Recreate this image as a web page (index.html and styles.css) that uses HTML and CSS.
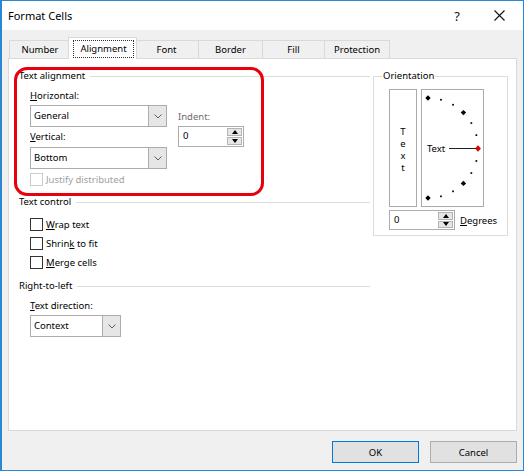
FILE: index.html
```html
<!DOCTYPE html>
<html>
<head>
<meta charset="utf-8">
<title>Format Cells</title>
<link rel="stylesheet" href="styles.css">
</head>
<body>
<div class="dialog">
  <div class="titlebar">
    <span class="title">Format Cells</span>
    <span class="help">?</span>
    <span class="close"><svg width="11" height="11" viewBox="0 0 11 11"><path d="M0.5 0.5L10.5 10.5M10.5 0.5L0.5 10.5" stroke="#111" stroke-width="1.1" fill="none"/></svg></span>
  </div>
  <div class="client">
    <div class="tabs">
      <div class="tab t-number">Number</div>
      <div class="tab active t-align"><span class="focus">Alignment</span></div>
      <div class="tab t-font">Font</div>
      <div class="tab t-border">Border</div>
      <div class="tab t-fill">Fill</div>
      <div class="tab t-prot">Protection</div>
    </div>
    <div class="panel">
      <div class="leftcol">
        <div class="head"><span>Text alignment</span><span class="rule"></span></div>
        <div class="sec align-row">
          <div class="align-main">
            <div class="lbl"><u>H</u>orizontal:</div>
            <div class="combo w-main first">
              <span class="val">General</span>
              <span class="arrow"><svg width="8" height="5" viewBox="0 0 8 5"><path d="M0.5 0.5L4 4L7.5 0.5" stroke="#606060" fill="none"/></svg></span>
            </div>
            <div class="lbl gap2"><u>V</u>ertical:</div>
            <div class="combo w-main">
              <span class="val">Bottom</span>
              <span class="arrow"><svg width="8" height="5" viewBox="0 0 8 5"><path d="M0.5 0.5L4 4L7.5 0.5" stroke="#606060" fill="none"/></svg></span>
            </div>
          </div>
          <div class="indent-col">
            <div class="lbl dim">Indent:</div>
            <div class="spin indent-spin">
              <span class="val">0</span>
              <span class="btns"><span class="sb up"></span><span class="sb down"></span></span>
            </div>
          </div>
        </div>
        <div class="sec check disabled justify"><span class="cb"></span><span>Justify distributed</span></div>

        <div class="head h-control"><span>Text control</span><span class="rule"></span></div>
        <div class="sec checks">
          <div class="check"><span class="cb"></span><span><u>W</u>rap text</span></div>
          <div class="check"><span class="cb"></span><span>Shrin<u>k</u> to fit</span></div>
          <div class="check"><span class="cb"></span><span><u>M</u>erge cells</span></div>
        </div>

        <div class="head h-rtl"><span>Right-to-left</span><span class="rule"></span></div>
        <div class="sec">
          <div class="lbl gap4"><u>T</u>ext direction:</div>
          <div class="combo w-ctx first">
            <span class="val">Context</span>
            <span class="arrow"><svg width="8" height="5" viewBox="0 0 8 5"><path d="M0.5 0.5L4 4L7.5 0.5" stroke="#606060" fill="none"/></svg></span>
          </div>
        </div>
      </div>

      <fieldset class="orient">
        <legend>Orientation</legend>
        <div class="orient-row">
          <div class="vtext"><span>T</span><span>e</span><span>x</span><span>t</span></div>
          <div class="dial">
            <svg width="61" height="116" viewBox="0 0 61 116">
              <g fill="#000">
                <polygon points="6,5.3 8.7,8 6,10.7 3.3,8"/>
                <rect x="18.1" y="8.9" width="1.7" height="1.7"/>
                <rect x="30.2" y="13.9" width="1.7" height="1.7"/>
                <polygon points="41.4,19.9 44.1,22.6 41.4,25.3 38.7,22.6"/>
                <rect x="48.5" y="32.2" width="1.7" height="1.7"/>
                <rect x="53.5" y="44.3" width="1.7" height="1.7"/>
                <rect x="53.5" y="70.1" width="1.7" height="1.7"/>
                <rect x="48.5" y="82.2" width="1.7" height="1.7"/>
                <polygon points="41.4,90.7 44.1,93.4 41.4,96.1 38.7,93.4"/>
                <rect x="30.2" y="100.5" width="1.7" height="1.7"/>
                <rect x="18.1" y="105.5" width="1.7" height="1.7"/>
                <polygon points="6,105.3 8.7,108 6,110.7 3.3,108"/>
              </g>
              <line x1="27" y1="58.5" x2="54" y2="58.5" stroke="#222" stroke-width="1"/>
              <polygon points="56,55.6 58.6,58.5 56,61.4 53.4,58.5" fill="#e00000" stroke="#900" stroke-width="0.5"/>
              <text x="5" y="62" class="dial-text">Text</text>
            </svg>
          </div>
        </div>
        <div class="deg-row">
          <div class="spin deg-spin">
            <span class="val">0</span>
            <span class="btns"><span class="sb up"></span><span class="sb down"></span></span>
          </div>
          <span class="deg-lbl"><u>D</u>egrees</span>
        </div>
      </fieldset>

      <div class="annot"></div>
    </div>
    <div class="footer">
      <button class="btn default">OK</button>
      <button class="btn">Cancel</button>
    </div>
  </div>
</div>
</body>
</html>
```

FILE: styles.css
```css
* { box-sizing: border-box; }
html, body { margin: 0; padding: 0; background: #fff; }
body {
  font-family: "Noto Sans", "Open Sans", sans-serif;
  font-size: 9.5px;
  color: #000;
  width: 526px;
  height: 472px;
  overflow: hidden;
}
u { text-decoration: underline; text-underline-offset: 1px; }

.dialog {
  width: 524px;
  height: 471px;
  border: 1px solid #2b86d3;
  border-left-width: 2px;
  display: flex;
  flex-direction: column;
  background: #f0f0f0;
}

.titlebar {
  height: 29px;
  flex: none;
  background: #fff;
  display: flex;
  align-items: center;
  padding: 0 18px 0 6px;
}
.title { font-size: 11px; }
.help { margin-left: auto; font-size: 13px; width: 14px; text-align: center; color: #111; }
.close { margin-left: 30px; display: flex; }

.client {
  flex: 1;
  padding: 7px 6px 0 6px;
  display: flex;
  flex-direction: column;
}

.tabs {
  height: 21px;
  display: flex;
  align-items: flex-end;
}
.tab {
  height: 18px;
  border: 1px solid #d9d9d9;
  border-bottom: none;
  background: #f0f0f0;
  margin-left: -1px;
  display: flex;
  align-items: center;
  justify-content: center;
  line-height: 16px;
  padding-top: 1px;
}
.t-number { width: 62px; margin-left: 1px; }
.t-align { width: 69px; }
.t-font { width: 65px; }
.t-border { width: 65px; }
.t-fill { width: 63px; }
.t-prot { width: 66px; }
.tab.active {
  position: relative;
  z-index: 1;
  height: 22px;
  margin-left: -3px;
  margin-right: -2px;
  margin-bottom: -1px;
  background: #fff;
  align-items: flex-start;
  justify-content: flex-start;
  padding: 2px 2px 0 4px;
}
.focus {
  display: flex;
  align-items: center;
  justify-content: center;
  width: 61px;
  height: 18px;
  outline: 1px dotted #333;
  outline-offset: -1px;
}

.panel {
  position: relative;
  height: 373px;
  flex: none;
  border: 1px solid #d9d9d9;
  background: #fff;
  display: flex;
  align-items: flex-start;
}

.leftcol {
  width: 364px;
  padding: 9px 3px 0 10px;
}
.head {
  display: flex;
  align-items: center;
  height: 16px;
  line-height: 16px;
}
.rule {
  flex: 1;
  margin-left: 5px;
  border-top: 1px solid #dcdcdc;
}
.h-control { margin-top: 7px; }
.h-rtl { margin-top: 6px; }

.sec { padding-left: 11px; }
.lbl { height: 16px; line-height: 16px; }
.gap2 { margin-top: 2px; }
.gap4 { margin-top: 4px; }
.dim { color: #6d6d6d; }

.align-row { display: flex; margin-top: 4px; }
.align-main { width: 137px; }
.indent-col { margin-left: 11px; padding-top: 21px; }

.combo {
  display: flex;
  height: 22px;
  border: 1px solid #acacac;
  background: #fff;
  margin-top: 2px;
}
.combo.first { margin-top: 1px; }
.w-main { width: 137px; }
.w-ctx { width: 91px; }
.combo .val { flex: 1; padding-left: 3px; line-height: 20px; }
.combo .arrow {
  width: 18px;
  background: #e6e6e6;
  border-left: 1px solid #acacac;
  display: flex;
  align-items: center;
  justify-content: center;
}

.spin {
  display: flex;
  width: 66px;
  border: 1px solid #acacac;
  background: #fff;
}
.indent-spin { height: 21px; margin-top: 1px; }
.deg-spin { height: 20px; }
.spin .val { flex: 1; padding-left: 4px; line-height: 18px; }
.spin .btns {
  width: 16px;
  padding: 1px 1px 1px 0;
  display: flex;
  flex-direction: column;
  gap: 1px;
}
.sb {
  flex: 1;
  background: #e6e6e6;
  border: 1px solid #b4b4b4;
  display: flex;
  align-items: center;
  justify-content: center;
}
.sb.up::after {
  content: "";
  border-left: 3.5px solid transparent;
  border-right: 3.5px solid transparent;
  border-bottom: 4px solid #000;
}
.sb.down::after {
  content: "";
  border-left: 3.5px solid transparent;
  border-right: 3.5px solid transparent;
  border-top: 4px solid #000;
}

.check {
  display: flex;
  align-items: center;
  height: 19px;
}
.cb {
  width: 13px;
  height: 13px;
  border: 1px solid #333;
  background: #fff;
  margin-right: 3px;
  flex: none;
}
.justify { margin-top: 2px; height: 16px; }
.disabled { color: #a0a0a0; }
.disabled .cb { border-color: #cccccc; }
.checks { margin-top: 5px; }

.orient {
  margin: 9px 0 0 0;
  width: 135px;
  min-width: 0;
  border: 1px solid #dcdcdc;
  padding: 5px 0 5px 15px;
}
.orient legend {
  padding: 0 1px;
  margin-left: -7px;
  line-height: 16px;
}
.orient-row { display: flex; gap: 4px; }
.vtext {
  width: 28px;
  height: 118px;
  border: 1px solid #aaaaaa;
  display: flex;
  flex-direction: column;
  align-items: center;
  justify-content: center;
  line-height: 12px;
  padding-top: 3px;
}
.dial {
  width: 63px;
  height: 118px;
  border: 1px solid #aaaaaa;
}
.dial svg { display: block; }
.dial-text { font-family: "Noto Sans", "Open Sans", sans-serif; font-size: 9.5px; fill: #000; }

.deg-row { display: flex; align-items: center; margin-top: 3px; }
.deg-lbl { margin-left: 5px; }

.annot {
  position: absolute;
  left: 5px;
  top: 8px;
  width: 250px;
  height: 129px;
  border: 3px solid #e8000d;
  border-radius: 13px;
}

.footer {
  display: flex;
  justify-content: flex-end;
  gap: 11px;
  padding-top: 10px;
}
.btn {
  width: 87px;
  height: 22px;
  font-family: inherit;
  font-size: 9.5px;
  color: #000;
  background: #e1e1e1;
  border: 1px solid #adadad;
  padding: 0;
  margin: 0;
}
.btn.default { border-color: #0078d7; }
```
